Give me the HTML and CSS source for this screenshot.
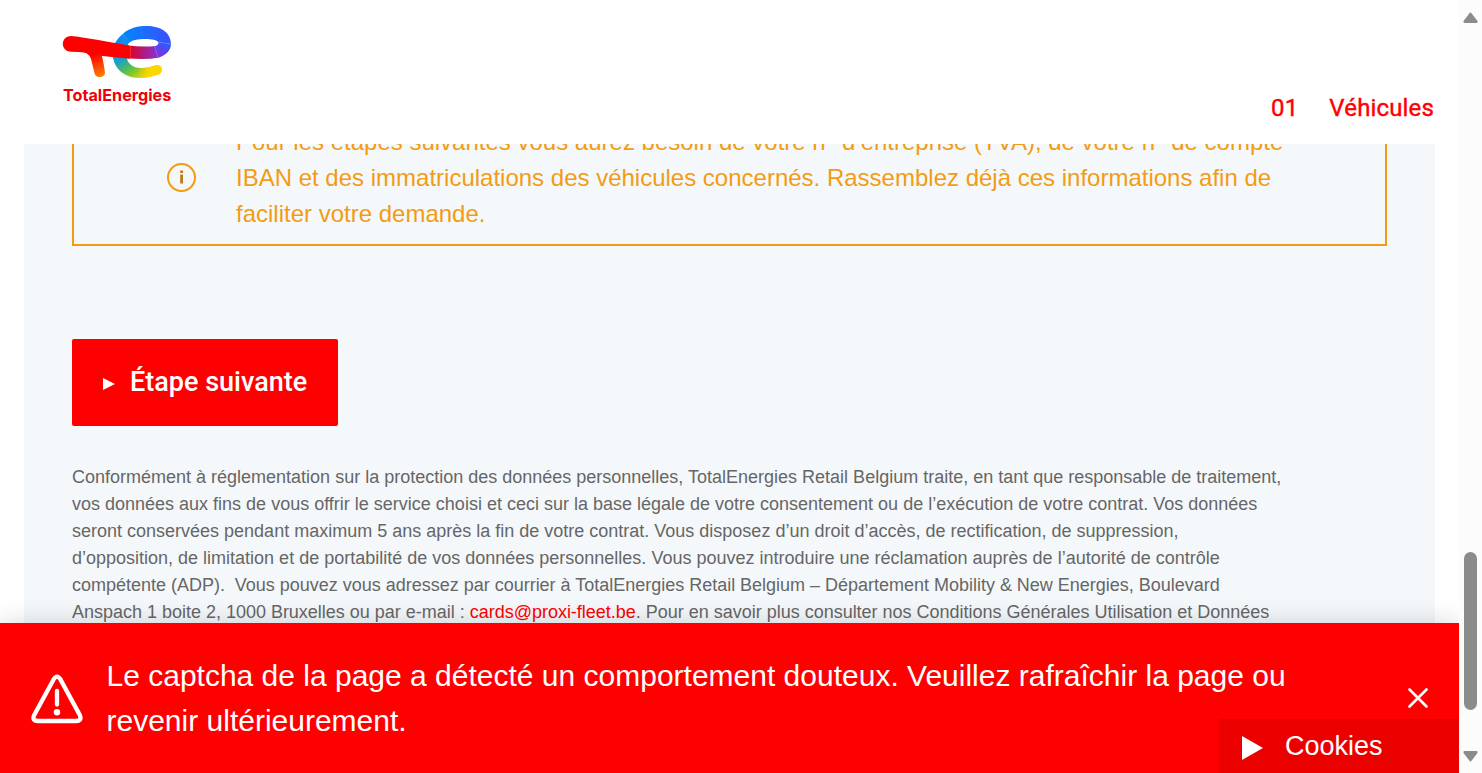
FILE: index.html
```html
<!DOCTYPE html>
<html lang="fr">
<head>
<meta charset="utf-8">
<title>TotalEnergies</title>
<link rel="stylesheet" href="styles.css">
</head>
<body>
<div class="window">
  <div class="page">
    <header class="header">
      <svg class="logo" viewBox="0 0 420 300" aria-label="TotalEnergies">
        <defs>
          <linearGradient id="bar" gradientUnits="userSpaceOnUse" x1="130" y1="120" x2="155" y2="185"><stop offset="0" stop-color="#f00"/><stop offset="1" stop-color="#ff8200"/></linearGradient>
          <linearGradient id="mid" gradientUnits="userSpaceOnUse" x1="238" y1="0" x2="320" y2="0"><stop offset="0" stop-color="#e00024"/><stop offset="1" stop-color="#8530d1"/></linearGradient>
          <linearGradient id="right" gradientUnits="userSpaceOnUse" x1="325" y1="125" x2="345" y2="86"><stop offset="0" stop-color="#8530d1"/><stop offset="1" stop-color="#3356ff"/></linearGradient>
          <linearGradient id="top" gradientUnits="userSpaceOnUse" x1="220" y1="0" x2="340" y2="0"><stop offset="0" stop-color="#0088fa"/><stop offset="1" stop-color="#3356ff"/></linearGradient>
          <linearGradient id="left" gradientUnits="userSpaceOnUse" x1="205" y1="80" x2="282" y2="190"><stop offset="0" stop-color="#1288f5"/><stop offset=".36" stop-color="#16a0ce"/><stop offset=".68" stop-color="#66c33b"/><stop offset="1" stop-color="#f0d300"/></linearGradient>
          <linearGradient id="tail" gradientUnits="userSpaceOnUse" x1="262" y1="0" x2="305" y2="0"><stop offset="0" stop-color="#ffd700" stop-opacity="0"/><stop offset="1" stop-color="#ffd700"/></linearGradient>
        </defs>
        <path fill="url(#left)" d="M218 57C200 72 188 91 188 115C188 160 223 189 268 189C291 189 311 184 328 177C342 171 336 148 320 150C309 154 291 159 274 159C247 159 230 143 230 122C230 105 231 88 240 78Z"/>
        <path fill="url(#tail)" d="M262 189H268C291 189 311 184 328 177C342 171 336 148 320 150C309 154 291 159 274 159H262Z"/>
        <path fill="url(#top)" d="M218 57C239 38 265 33 291 33C330 33 363 51 363 87L325 82C321 75 306 72 286 72C265 72 244 75 234 86Z"/>
        <path fill="url(#right)" d="M325 81C327 88 322 92 313 94L323 129C346 121 363 108 363 86Z"/>
        <path fill="url(#mid)" d="M230 91Q279 97 315 93L324 128Q290 135 230 130Z"/>
        <path fill="#f00" d="M63 63Q91 65 240 92L241 131Q190 127 151 122L125 116Q112 111 63 110C31 110 30 64 63 63Z"/>
        <path fill="url(#bar)" d="M88 109Q116 111 123 132L134 176C139 192 165 188 165 173Q160 137 155 121L130 105Z"/>
        <path class="seam" d="M218 57L237 80M326 81L363 88M314 94L324 127M241 91V131"/>
        <text class="wordmark" x="39" y="258" textLength="325" lengthAdjust="spacingAndGlyphs">TotalEnergies</text>
      </svg>
      <nav class="steps"><span>01</span><span class="step-name">Véhicules</span></nav>
    </header>
    <main class="sheet">
      <section class="notice">
        <svg class="info" viewBox="0 0 30 30"><circle cx="14.500" cy="14.500" r="13.500" fill="none" stroke="#f39c12" stroke-width="2"/><path fill="#bd7a13" d="M13.200 7.500h2.800v2.500h-2.800zM13.200 11.500h2.800v9h-2.800z"/></svg>
        <p class="notice-text">Pour les étapes suivantes vous aurez besoin de votre n° d’entreprise (TVA), de votre n° de compte<br>IBAN et des immatriculations des véhicules concernés. Rassemblez déjà ces informations afin de<br>faciliter votre demande.</p>
      </section>
      <button class="next"><svg class="next-arrow" viewBox="0 0 12 12"><path d="M0 0L12 6L0 12Z"/></svg>Étape suivante</button>
      <p class="legal">Conformément à réglementation sur la protection des données personnelles, TotalEnergies Retail Belgium traite, en tant que responsable de traitement,<br>vos données aux fins de vous offrir le service choisi et ceci sur la base légale de votre consentement ou de l’exécution de votre contrat. Vos données<br>seront conservées pendant maximum 5 ans après la fin de votre contrat. Vous disposez d’un droit d’accès, de rectification, de suppression,<br>d’opposition, de limitation et de portabilité de vos données personnelles. Vous pouvez introduire une réclamation auprès de l’autorité de contrôle<br><span class="tight">compétente (ADP).&nbsp; Vous pouvez vous adressez par courrier à TotalEnergies Retail Belgium – Département Mobility &amp; New Energies, Boulevard<br>Anspach 1 boite 2, 1000 Bruxelles ou par e-mail : <a class="mail">cards@proxi-fleet.be</a>. Pour en savoir plus consulter nos Conditions Générales Utilisation et Données</span></p>
    </main>
    <div class="alert">
      <svg class="warning" viewBox="0 0 52 50"><path d="M22.700 5.200L3 41.500Q.8 47 7 47H45Q51 47 49 41.500L29.300 5.200Q26 0 22.700 5.200Z"/><path d="M26 17V30.500"/><circle cx="26" cy="38.300" r="3.200"/></svg>
      <p class="alert-text">Le captcha de la page a détecté un comportement douteux. Veuillez rafraîchir la page ou<br>revenir ultérieurement.</p>
      <svg class="close" viewBox="0 0 20 20"><path d="M1.500 1.500L18.500 18.500M18.500 1.500L1.500 18.500"/></svg>
      <div class="cookies"><svg class="cookies-arrow" viewBox="0 0 21 24"><path d="M0 0L21 12L0 24Z"/></svg>Cookies</div>
    </div>
  </div>
  <div class="scrollbar">
    <svg class="scroll-arrow" viewBox="0 0 15 11"><path d="M6.500 1.200Q7.500 0 8.500 1.200L14.500 9Q15 11 13.500 11H1.500Q0 11 .5 9Z"/></svg>
    <div class="thumb"></div>
    <svg class="scroll-arrow" viewBox="0 0 15 11"><path d="M6.500 9.800Q7.500 11 8.500 9.800L14.500 2Q15 0 13.500 0H1.500Q0 0 .5 2Z"/></svg>
  </div>
</div>
</body>
</html>
```

FILE: styles.css
```css
* { box-sizing: border-box; }
body { margin: 0; background: #fff; font-family: "Liberation Sans", Arial, sans-serif; }
p { margin: 0; white-space: nowrap; }
.window { display: flex; width: 1482px; height: 773px; overflow: hidden; }
.page { display: flex; flex-direction: column; width: 1459px; }
.header { display: flex; justify-content: space-between; height: 144px; padding: 15px 25px 0 50px; }
.logo { width: 140px; height: 100px; }
.seam { fill: none; stroke: #ffffff88; stroke-width: 1.5; stroke-dasharray: 5 2; }
.wordmark { font: 700 49px Inter, sans-serif; fill: #f0000c; }
.steps { display: flex; gap: 31px; padding-top: 78px; font: 400 24px/30px Roboto, sans-serif; letter-spacing: .15px; color: #f00; -webkit-text-stroke: .4px #f00; }
.sheet { height: 479px; margin: 0 24px; padding: 0 48px; background: #f4f8fb; overflow: hidden; }
.notice { display: flex; align-items: center; height: 137px; margin-top: -35px; padding: 0 0 0 93px; border: 2px solid #f39c12; }
.info { width: 30px; height: 30px; margin-right: 39px; }
.notice-text { font-size: 24px; line-height: 36px; color: #f39c12; }
.next { display: flex; align-items: center; width: 266px; height: 87px; margin: 93px 0 38px; padding: 0 0 2px 31px; border: 0; border-radius: 2px; background: #f00; color: #fff; font: 500 27px/40px Roboto, sans-serif; white-space: nowrap; }
.next-arrow { width: 12px; height: 12px; margin: 5px 15px 0 0; fill: #fff; }
.legal { font-size: 18px; line-height: 27px; color: #666; }
.tight { letter-spacing: -.011px; }
.mail { color: #f00; }
.alert { position: relative; display: flex; align-items: center; height: 150px; padding: 0 31px 0 31px; background: #f00; color: #fff; box-shadow: 0 0 24px rgba(0,0,0,.16); }
.warning { width: 52px; height: 50px; margin: 1px 23.5px 0 0; fill: none; stroke: #fff; stroke-width: 4.300; stroke-linecap: round; }
.warning circle { fill: #fff; stroke: none; }
.alert-text { flex: 1; font-size: 30px; line-height: 45px; }
.close { width: 20px; height: 20px; stroke: #fff; stroke-width: 2.600; stroke-linecap: round; }
.cookies { position: absolute; right: 0; bottom: 0; display: flex; align-items: center; width: 240px; height: 54px; padding-left: 23px; background: #eb0000; font-size: 27px; }
.cookies-arrow { width: 21px; height: 24px; margin: 3px 22px 0 0; fill: #fff; }
.scrollbar { position: relative; display: flex; flex-direction: column; align-items: center; width: 23px; padding: 12px 0 11px; background: #fcfcfc; }
.scroll-arrow { width: 15px; height: 11px; fill: #8b8b8b; }
.thumb { width: 13px; height: 158px; margin: 529px 0 41px; border-radius: 7px; background: #8b8b8b; }
```
